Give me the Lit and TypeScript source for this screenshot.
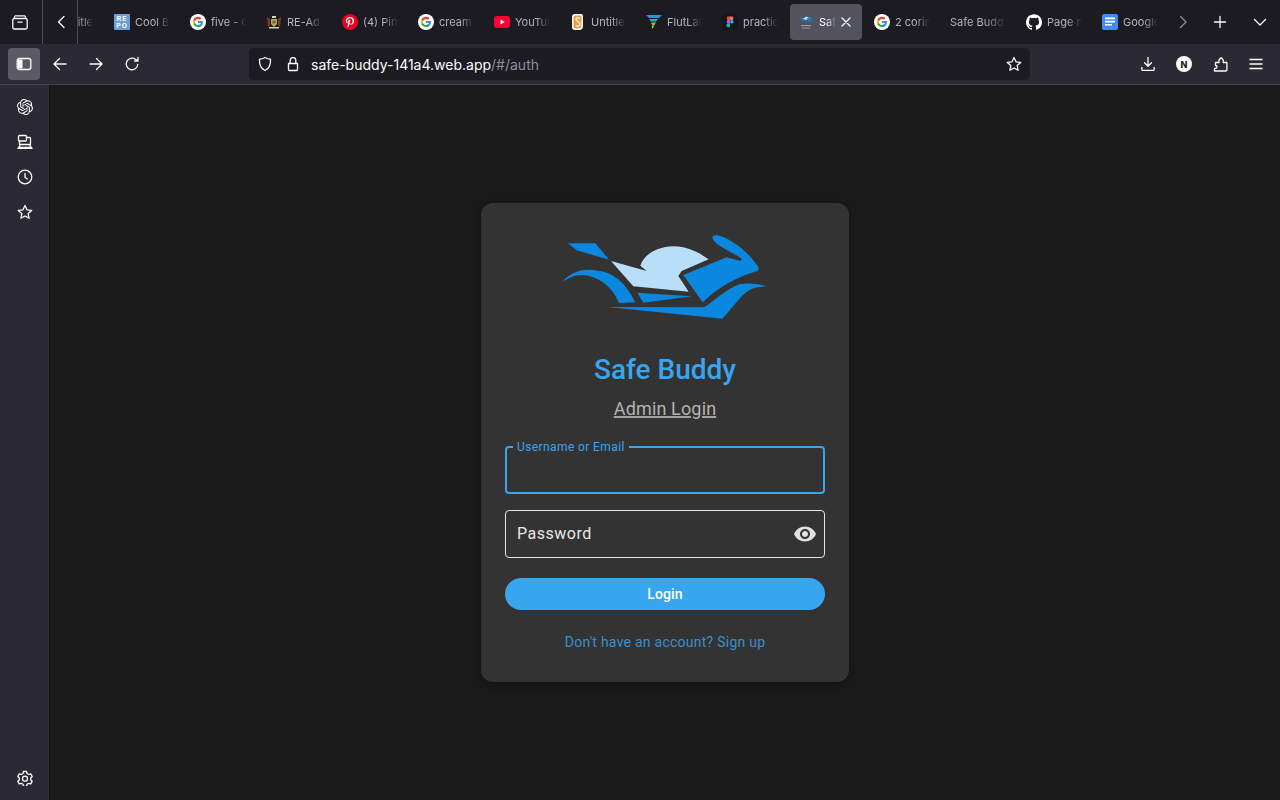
import { LitElement, html, svg, css } from "lit";
import { customElement } from "lit/decorators.js";

const G = svg`<circle cx="12" cy="12" r="12" fill="#fff"/>
  <g transform="translate(3.6 3.6) scale(.7)">
    <path fill="#4285f4" d="M22.56 12.25c0-.78-.07-1.53-.2-2.25H12v4.26h5.92c-.26 1.37-1.04 2.53-2.21 3.31v2.77h3.57c2.08-1.92 3.28-4.74 3.28-8.09z"/>
    <path fill="#34a853" d="M12 23c2.97 0 5.46-.98 7.28-2.66l-3.57-2.77c-.98.66-2.23 1.06-3.71 1.06-2.86 0-5.29-1.93-6.16-4.53H2.18v2.84C3.99 20.53 7.7 23 12 23z"/>
    <path fill="#fbbc05" d="M5.84 14.09c-.22-.66-.35-1.36-.35-2.09s.13-1.43.35-2.09V7.07H2.18C1.43 8.55 1 10.22 1 12s.43 3.45 1.18 4.93l2.85-2.22.81-.62z"/>
    <path fill="#ea4335" d="M12 5.38c1.62 0 3.06.56 4.21 1.64l3.15-3.15C17.45 2.09 14.97 1 12 1 7.7 1 3.99 3.47 2.18 7.07l3.66 2.84c.87-2.6 3.3-4.53 6.16-4.53z"/>
  </g>`;

const LOGO = svg`
  <path fill="#0a88df" d="M54 55H136L177 104 80 76Z"/>
  <path fill="#b9dff8" d="M183 108 290 138 271 122C280 90 320 65 370 64 415 64 450 85 476 103L395 138 385 153 416 200 250 184Z"/>
  <path fill="#0a88df" d="M400 150 530 97 572 108 576 102C555 85 500 65 488 42 484 28 500 28 520 36 570 58 610 100 627 130L622 138C560 155 500 190 458 232Z"/>
  <path fill="#0a88df" d="M37 170C60 145 90 130 130 135 190 140 225 170 256 232L207 234C190 190 150 155 100 150 75 148 55 160 37 170Z"/>
  <path fill="#0a88df" d="M262 203 425 214 280 233Z"/>
  <path fill="#0a88df" d="M175 246 462 247C490 230 530 190 570 177 600 172 630 178 652 184 610 185 590 195 570 220L517 281Z"/>`;

const tabIcons: Record<string, unknown> = {
  repo: html`<span class="repo">RE<br />PO</span>`,
  google: html`<svg class="fav" viewBox="0 0 24 24">${G}</svg>`,
  crest: html`<svg class="fav" viewBox="0 0 16 16">
    <path fill="#c9a64a" d="M5 5h6v5l-3 3-3-3z" />
    <path fill="#2f7d4f" d="M6.5 6.5h3v3h-3z" />
    <path fill="#7a3b2a" d="M1 3l3 2v6L2 13zM15 3l-3 2v6l2 2z" />
    <path fill="#d9d0b8" d="M6 2h4v2H6zM3 13h10v1.500H3z" />
  </svg>`,
  pinterest: html`<svg class="fav" viewBox="0 0 24 24">
    <circle cx="12" cy="12" r="12" fill="#e60023" />
    <path fill="#fff" d="M12.300 4.500c-4.200 0-6.400 2.800-6.400 5.900 0 1.400.8 3.200 2 3.800.4.200.4 0 .6-.8 0-.2 0-.4-.2-.6-.4-.5-.7-1.300-.7-2.200 0-2.100 1.600-4.100 4.300-4.100 2.400 0 4 1.600 4 3.900 0 2.600-1.300 4.400-3 4.400-.9 0-1.600-.8-1.400-1.700.3-1.100.8-2.300.8-3.100 0-.7-.4-1.300-1.200-1.300-.9 0-1.700 1-1.700 2.300 0 .8.300 1.400.3 1.400l-1.100 4.700c-.3 1.200 0 3.100 0 3.300l.2.100c.1-.2 1.300-1.900 1.700-3.300l.6-2.400c.3.600 1.200 1.100 2.200 1.100 2.900 0 4.900-2.600 4.900-5.900 0-3-2.600-5.500-5.900-5.500z"
    />
  </svg>`,
  youtube: html`<svg class="fav" viewBox="0 0 16 16">
    <rect y="2" width="16" height="12" rx="3" fill="#ff0033" />
    <path fill="#fff" d="M6.500 5.500 10.700 8 6.500 10.500z" />
  </svg>`,
  scroll: html`<svg class="fav" viewBox="0 0 16 16">
    <path fill="#fff" d="M5 0h6c2 0 2 2 2 3v9c0 3-2 4-4 4H5c-2 0-3-1-3-3V3c0-2 1-3 3-3z" />
    <path fill="#f09a42" d="M5.500 1.500h5c1 0 1 1 1 2v8c0 2-1 3-3 3h-3c-1 0-2-.5-2-2v-9c0-1 1-2 2-2z" />
    <path fill="none" stroke="#fff" stroke-width="1.200" d="M10 4.500C8 3 6 4 6 5.500s4 2.500 4 4.500-2.500 2.700-4 1.500" />
  </svg>`,
  flutlab: html`<svg class="fav" viewBox="0 0 16 16">
    <path fill="#1a9be0" d="M0 1h16l-3 3H3z" />
    <path fill="#1dbb9a" d="M3 5h9l-2 2.500H5z" />
    <path fill="#7ec850" d="M5 8.500h5L8.500 11H6z" />
    <path fill="#f4c430" d="M6 11.500h2.500L6 15z" />
  </svg>`,
  figma: html`<svg class="fav" viewBox="0 0 16 16">
    <rect width="16" height="16" rx="3" fill="#17161c" />
    <path fill="#f24e1e" d="M5.500 2.500H8v3.500H5.700C4.500 6 4.500 2.500 5.500 2.500z" />
    <path fill="#ff7262" d="M8 2.500h2.300c1.400 0 1.400 3.500 0 3.500H8z" />
    <path fill="#a259ff" d="M5.700 6H8v3.500H5.700C4.500 9.500 4.500 6 5.700 6z" />
    <circle cx="9.900" cy="7.750" r="1.750" fill="#1abcfe" />
    <path fill="#0acf83" d="M5.700 9.500H8v2c0 2.200-3.500 2.200-3.500 0 0-1 .5-2 1.200-2z" />
  </svg>`,
  safe: html`<svg class="fav" viewBox="0 0 16 16">
    <svg x="0" y="1" width="16" height="8" viewBox="0 0 690 315">${LOGO}</svg>
    <path fill="#9aa0a8" d="M3 11h10v1H3zM4 13.500h8v1H4z" />
  </svg>`,
  github: html`<svg class="fav" viewBox="0 0 24 24">
    <path fill="#fff" d="M12 .297c-6.630 0-12 5.373-12 12 0 5.303 3.438 9.800 8.205 11.385.6.113.82-.258.82-.577 0-.285-.01-1.040-.015-2.040-3.338.724-4.042-1.610-4.042-1.610C4.422 18.070 3.633 17.700 3.633 17.700c-1.087-.744.084-.729.084-.729 1.205.084 1.838 1.236 1.838 1.236 1.070 1.835 2.809 1.305 3.495.998.108-.776.417-1.305.76-1.605-2.665-.3-5.466-1.332-5.466-5.930 0-1.310.465-2.380 1.235-3.220-.135-.303-.54-1.523.105-3.176 0 0 1.005-.322 3.300 1.230.96-.267 1.980-.399 3-.405 1.020.006 2.040.138 3 .405 2.280-1.552 3.285-1.230 3.285-1.230.645 1.653.24 2.873.12 3.176.765.84 1.230 1.910 1.230 3.220 0 4.610-2.805 5.625-5.475 5.920.42.36.81 1.096.81 2.220 0 1.606-.015 2.896-.015 3.286 0 .315.21.69.825.57C20.565 22.092 24 17.592 24 12.297c0-6.627-5.373-12-12-12"
    />
  </svg>`,
  docs: html`<svg class="fav" viewBox="0 0 16 16">
    <rect width="16" height="16" rx="2" fill="#3f8cf5" />
    <path fill="#fff" d="M3 3.500h10v1.700H3zM3 6.700h10v1.700H3zM3 9.900h7v1.700H3z" />
  </svg>`,
  none: null,
};

// titles stop where the tab cuts them off
const TABS = [
  { icon: "repo", title: "Cool B" },
  { icon: "google", title: "five - G" },
  { icon: "crest", title: "RE-Ad" },
  { icon: "pinterest", title: "(4) Pin" },
  { icon: "google", title: "cream" },
  { icon: "youtube", title: "YouTul" },
  { icon: "scroll", title: "Untitle" },
  { icon: "flutlab", title: "FlutLal" },
  { icon: "figma", title: "practic" },
  { icon: "safe", title: "Saf", active: true },
  { icon: "google", title: "2 corin" },
  { icon: "none", title: "Safe Budd" },
  { icon: "github", title: "Page n" },
  { icon: "docs", title: "Google" },
];

const line = (d: string, size = 16) => html`<svg
  class="ico"
  width=${size}
  height=${size}
  viewBox="0 0 16 16"
>
  <path d=${d} />
</svg>`;

@customElement("app-root")
export class AppRoot extends LitElement {
  static styles = css`
    :host {
      display: flex;
      flex-direction: column;
      width: 1280px;
      height: 800px;
      overflow: hidden;
      background: #1a1a1a;
      font-family: Inter, "Liberation Sans", sans-serif;
      color: #fbfbfe;
    }
    .ico {
      display: block;
      fill: none;
      stroke: #fbfbfe;
      stroke-width: 1.3;
      stroke-linecap: round;
      stroke-linejoin: round;
      flex: none;
    }
    .ico.dim {
      stroke: #8f8f9d;
    }

    /* tab strip */
    .tabstrip {
      display: flex;
      align-items: center;
      height: 44px;
      background: #1c1b22;
      flex: none;
    }
    .tabs-menu {
      flex: none;
      width: 43px;
      height: 44px;
      box-sizing: border-box;
      display: flex;
      align-items: center;
      justify-content: center;
      border-right: 1px solid #4a4a52;
      padding-right: 3px;
    }
    .scroll-left {
      flex: none;
      width: 35px;
      height: 44px;
      box-sizing: border-box;
      display: flex;
      align-items: center;
      justify-content: center;
      border-right: 1px solid #4a4a52;
    }
    .clipped {
      flex: none;
      width: 15px;
      margin-right: 13px;
      font-size: 11px;
      color: #8f8f9d;
      overflow: hidden;
      display: flex;
      justify-content: flex-end;
      -webkit-mask-image: linear-gradient(90deg, #000 50%, transparent);
      mask-image: linear-gradient(90deg, #000 50%, transparent);
      white-space: nowrap;
    }
    .tabs {
      display: flex;
      gap: 4px;
      flex: none;
    }
    .tab {
      width: 72px;
      height: 36px;
      box-sizing: border-box;
      padding: 0 8px;
      display: flex;
      align-items: center;
      gap: 5px;
      border-radius: 4px;
      color: #b4b4bb;
      font-size: 11px;
    }
    .tab.active {
      background: #53535d;
      color: #fff;
    }
    .fav {
      width: 16px;
      height: 16px;
      flex: none;
      display: block;
    }
    .repo {
      width: 16px;
      height: 16px;
      flex: none;
      background: #6a9fd8;
      color: #fff;
      border-radius: 1px;
      font: 700 6.500px/7px "Liberation Sans", sans-serif;
      letter-spacing: 1px;
      text-align: center;
      padding-top: 1px;
      box-sizing: border-box;
    }
    .title {
      flex: 1;
      min-width: 0;
      overflow: hidden;
      white-space: nowrap;
      -webkit-mask-image: linear-gradient(90deg, #000 60%, transparent);
      mask-image: linear-gradient(90deg, #000 60%, transparent);
    }
    .tab.active .title {
      -webkit-mask-image: linear-gradient(90deg, #000 40%, transparent 95%);
      mask-image: linear-gradient(90deg, #000 40%, transparent 95%);
      flex: none;
      width: 18px;
    }
    .close {
      margin-left: -4px;
    }
    .strip-end {
      display: flex;
      align-items: center;
      margin-left: -1px;
      flex: none;
    }
    .strip-end > * {
      width: 36px;
      display: flex;
      justify-content: center;
      margin-left: 1px;
    }
    .strip-end > :first-child {
      margin-left: 0;
    }
    .strip-end > :last-child {
      margin-left: 4px;
    }

    /* toolbar */
    .toolbar {
      height: 40px;
      background: #2b2a33;
      border-bottom: 1px solid #45444d;
      display: flex;
      align-items: center;
      padding: 0 8px;
      flex: none;
      gap: 4px;
    }
    .btn {
      width: 32px;
      height: 32px;
      border-radius: 4px;
      display: flex;
      align-items: center;
      justify-content: center;
      flex: none;
    }
    .btn.on {
      background: #5b5b66;
    }
    .urlbar {
      width: 781px;
      height: 32px;
      margin: 0 98px 0 97px;
      background: #1c1b22;
      border-radius: 4px;
      display: flex;
      align-items: center;
      padding: 0 8px;
      box-sizing: border-box;
      font-size: 14px;
      flex: none;
    }
    .urlbar .shield {
      margin-right: 12px;
    }
    .urlbar .lock {
      margin-right: 10px;
    }
    .url {
      flex: 1;
    }
    .url span {
      color: #8f8f9d;
    }
    .avatar {
      width: 16px;
      height: 16px;
      border-radius: 50%;
      background: #fbfbfe;
      color: #1c1b22;
      font-size: 9px;
      font-weight: 800;
      display: flex;
      align-items: center;
      justify-content: center;
    }

    /* sidebar and page */
    .body {
      flex: 1;
      min-height: 0;
      display: flex;
    }
    .sidebar {
      width: 49px;
      background: #2b2a33;
      border-right: 1px solid #131316;
      display: flex;
      flex-direction: column;
      align-items: center;
      padding: 4px 0 5px;
      box-sizing: content-box;
      flex: none;
    }
    .side-btn {
      width: 49px;
      height: 35px;
      display: flex;
      align-items: center;
      justify-content: center;
    }
    .side-spacer {
      flex: 1;
    }
    .openai {
      display: block;
      fill: #fbfbfe;
    }
    .page {
      flex: 1;
      display: flex;
      align-items: center;
      justify-content: center;
      font-family: Roboto, sans-serif;
    }

    /* login card */
    .card {
      width: 368px;
      box-sizing: border-box;
      background: #333333;
      border-radius: 12px;
      padding: 22px 24px 30px;
      display: flex;
      flex-direction: column;
      align-items: stretch;
      box-shadow: 0 2px 8px rgba(0, 0, 0, 0.35);
    }
    .logo {
      display: block;
      width: 230px;
      height: 105px;
      align-self: center;
    }
    .brand {
      margin-top: 22px;
      font-size: 28px;
      line-height: 36px;
      font-weight: 500;
      color: #38a6ef;
      text-align: center;
    }
    .admin {
      margin-top: 9px;
      font-size: 18px;
      line-height: 24px;
      color: #b4b4b4;
      text-align: center;
      text-decoration: underline;
      text-decoration-thickness: 2px;
      text-decoration-color: #a0a0a0;
      letter-spacing: 0.15px;
    }
    .field {
      position: relative;
      height: 48px;
      box-sizing: border-box;
      border: 1px solid #e4e4e4;
      border-radius: 4px;
      display: flex;
      align-items: center;
      justify-content: space-between;
      padding: 0 7px 0 11px;
      margin-top: 16px;
      font-size: 16px;
      letter-spacing: 0.5px;
      color: #e8e8e8;
    }
    .field.focus {
      margin-top: 25px;
      border: 2px solid #38a6ef;
    }
    .pw {
      margin-top: -1px;
    }
    .float {
      position: absolute;
      left: 6px;
      top: -9px;
      padding: 0 4px;
      background: #333333;
      font-size: 12px;
      line-height: 16px;
      letter-spacing: 0.4px;
      color: #38a6ef;
    }
    .eye {
      display: block;
      fill: #e0e0e0;
    }
    .login {
      margin-top: 20px;
      height: 32px;
      border-radius: 16px;
      background: #38a6ef;
      color: #fff;
      font-size: 14px;
      font-weight: 500;
      letter-spacing: 0.1px;
      display: flex;
      align-items: center;
      justify-content: center;
    }
    .signup {
      margin-top: 22px;
      font-size: 14px;
      line-height: 20px;
      letter-spacing: 0.25px;
      color: #3a8fca;
      text-align: center;
    }
  `;

  private _renderTab(t: (typeof TABS)[number]) {
    return html`<div class="tab ${t.active ? "active" : ""}">
      ${tabIcons[t.icon]}
      <span class="title">${t.title}</span>
      ${t.active
        ? html`<span class="close">${line("M4 4l8 8M12 4l-8 8")}</span>`
        : ""}
    </div>`;
  }

  render() {
    return html`
      <div class="tabstrip">
        <div class="tabs-menu">
          ${line("M2.500 4V2.800c0-.6.4-1 1-1h9c.6 0 1 .4 1 1V4M2.300 4.500h11.400c.8 0 1.500.7 1.500 1.500v7.500c0 .8-.7 1.500-1.500 1.500H2.300c-.8 0-1.500-.7-1.500-1.500V6c0-.8.7-1.500 1.500-1.500zM6 8.200h4")}
        </div>
        <div class="scroll-left">${line("M12 2.500 6.500 8l5.500 5.500")}</div>
        <div class="clipped"><span>itle</span></div>
        <div class="tabs">${TABS.map((t) => this._renderTab(t))}</div>
        <div class="strip-end">
          <span><svg class="ico dim" width="16" height="16" viewBox="0 0 16 16"><path d="M5.500 2.500 11 8l-5.500 5.500" /></svg></span>
          <span>${line("M8 2.500v11M2.500 8h11")}</span>
          <span>${line("M2.500 5.500 8 11l5.500-5.500")}</span>
        </div>
      </div>

      <div class="toolbar">
        <div class="btn on">
          <svg width="16" height="16" viewBox="0 0 16 16" class="ico">
            <rect x="1.200" y="2.500" width="13.600" height="11" rx="2" />
            <path fill="#fbfbfe" stroke="none" d="M2 3.500h4.500v9H2z" />
          </svg>
        </div>
        <div class="btn">${line("M14 8H2M7.500 2.500 2 8l5.500 5.500")}</div>
        <div class="btn">${line("M2 8h12M8.500 2.500 14 8l-5.500 5.500")}</div>
        <div class="btn">${line("M13.800 8.500A5.800 5.800 0 1 1 11.500 3.300L14 5M14 1.500V5h-3.500")}</div>

        <div class="urlbar">
          <span class="shield">${line("M8 1.500c1.800 1.100 3.500 1.600 5.500 1.700.3 5.200-1.400 9.300-5.500 11.300C3.900 12.500 2.200 8.400 2.500 3.200 4.500 3.100 6.200 2.600 8 1.500z")}</span>
          <span class="lock">${line("M3.500 7.500h9v6a1 1 0 0 1-1 1h-7a1 1 0 0 1-1-1zM5.200 7.500V4.500a2.800 2.800 0 0 1 5.600 0v3")}</span>
          <div class="url">safe-buddy-141a4.web.app<span>/#/auth</span></div>
          ${line("M8 1.500l2 4.300 4.700.6-3.500 3.200.9 4.700L8 12l-4.100 2.300.9-4.700L1.300 6.400 6 5.800z")}
        </div>

        <div class="btn">${line("M8 1.500v8.500M4.500 6.800 8 10.300l3.500-3.500M1.800 11.500v1.700c0 .7.5 1.200 1.200 1.200h10c.7 0 1.200-.5 1.200-1.200v-1.700")}</div>
        <div class="btn"><span class="avatar">N</span></div>
        <div class="btn">${line("M2.500 15h11.200c.7 0 1.200-.5 1.200-1.200V6.500h-3.600c.4-1.400.1-3-1.600-4.500-1.600.3-3.200 1.800-2.700 4.500H3.500v3c2-.5 2 2.700 0 2.800H2.500z")}</div>
        <div class="btn">${line("M2 3.500h12M2 8h12M2 12.500h12")}</div>
      </div>

      <div class="body">
        <nav class="sidebar">
          <div class="side-btn">
            <svg class="openai" width="16" height="16" viewBox="0 0 24 24">
              <path d="M22.2819 9.8211a5.9847 5.9847 0 0 0-.5157-4.9108 6.0462 6.0462 0 0 0-6.5098-2.9A6.0651 6.0651 0 0 0 4.9807 4.1818a5.9847 5.9847 0 0 0-3.9977 2.9 6.0462 6.0462 0 0 0 .7427 7.0966 5.98 5.98 0 0 0 .511 4.9107 6.051 6.051 0 0 0 6.5146 2.9001A5.9847 5.9847 0 0 0 13.2599 24a6.0557 6.0557 0 0 0 5.7718-4.2058 5.9894 5.9894 0 0 0 3.9977-2.9001 6.0557 6.0557 0 0 0-.7475-7.0729zm-9.022 12.6081a4.4755 4.4755 0 0 1-2.8764-1.0408l.1419-.0804 4.7783-2.7582a.7948.7948 0 0 0 .3927-.6813v-6.7369l2.02 1.1686a.071.071 0 0 1 .038.052v5.5826a4.504 4.504 0 0 1-4.4945 4.4944zm-9.6607-4.1254a4.4708 4.4708 0 0 1-.5346-3.0137l.142.0852 4.783 2.7582a.7712.7712 0 0 0 .7806 0l5.8428-3.3685v2.3324a.0804.0804 0 0 1-.0332.0615L9.74 19.9502a4.4992 4.4992 0 0 1-6.1408-1.6464zM2.3408 7.8956a4.485 4.485 0 0 1 2.3655-1.9728V11.6a.7664.7664 0 0 0 .3879.6765l5.8144 3.3543-2.0201 1.1685a.0757.0757 0 0 1-.071 0l-4.8303-2.7865A4.504 4.504 0 0 1 2.3408 7.872zm16.5963 3.8558L13.1038 8.364 15.1192 7.2a.0757.0757 0 0 1 .071 0l4.8303 2.7913a4.4944 4.4944 0 0 1-.6765 8.1042v-5.6772a.79.79 0 0 0-.407-.667zm2.0107-3.0231l-.142-.0852-4.7735-2.7818a.7759.7759 0 0 0-.7854 0L9.409 9.2297V6.8974a.0662.0662 0 0 1 .0284-.0615l4.8303-2.7866a4.4992 4.4992 0 0 1 6.6802 4.66zM8.3065 12.863l-2.02-1.1638a.0804.0804 0 0 1-.038-.0567V6.0742a4.4992 4.4992 0 0 1 7.3757-3.4537l-.142.0805L8.704 5.459a.7948.7948 0 0 0-.3927.6813zm1.0976-2.3654l2.602-1.4998 2.6069 1.4998v2.9994l-2.5974 1.4997-2.6067-1.4997Z" />
            </svg>
          </div>
          <div class="side-btn">
            <svg class="ico" width="16" height="16" viewBox="0 0 16 16">
              <rect x="1.500" y="1.500" width="8" height="5.500" rx="1" />
              <path d="M9.500 3.500h3c.6 0 1 .4 1 1v6M2.500 7v3.500h11M3.500 10.500l-1.800 3h12.600l-1.800-3" />
              <path d="M1 14.300h14" stroke-width="1.600" />
            </svg>
          </div>
          <div class="side-btn">${line("M8 1.200a6.800 6.800 0 1 0 0 13.600A6.800 6.800 0 0 0 8 1.200zM8 4.500V8.300l2.300 1.700")}</div>
          <div class="side-btn">${line("M8 1.500l2 4.300 4.700.6-3.500 3.200.9 4.700L8 12l-4.100 2.300.9-4.700L1.300 6.400 6 5.800z")}</div>
          <div class="side-spacer"></div>
          <div class="side-btn">${line("M6.500 1.500h3l.5 2 1.800 1 2-.6 1.400 2.600-1.500 1.500v1.900l1.500 1.400-1.400 2.600-2-.6-1.800 1-.5 2h-3l-.5-2-1.800-1-2 .6L.8 11.300l1.500-1.400V8L.8 6.500l1.400-2.600 2 .6 1.800-1zM8 6.200a2.500 2.500 0 1 0 0 5 2.500 2.500 0 0 0 0-5z")}</div>
        </nav>

        <main class="page">
          <div class="card">
            <svg class="logo" viewBox="0 0 690 315">${LOGO}</svg>
            <div class="brand">Safe Buddy</div>
            <div class="admin">Admin Login</div>
            <div class="field focus">
              <span class="float">Username or Email</span>
            </div>
            <div class="field">
              <span class="pw">Password</span>
              <svg class="eye" width="24" height="24" viewBox="0 0 24 24">
                <path d="M12 4.500C7 4.500 2.730 7.610 1 12c1.730 4.390 6 7.500 11 7.500s9.270-3.110 11-7.500c-1.730-4.390-6-7.500-11-7.500zM12 17c-2.760 0-5-2.240-5-5s2.240-5 5-5 5 2.240 5 5-2.240 5-5 5zm0-8c-1.660 0-3 1.340-3 3s1.340 3 3 3 3-1.340 3-3-1.340-3-3-3z" />
              </svg>
            </div>
            <div class="login">Login</div>
            <div class="signup">Don't have an account? Sign up</div>
          </div>
        </main>
      </div>
    `;
  }
}
